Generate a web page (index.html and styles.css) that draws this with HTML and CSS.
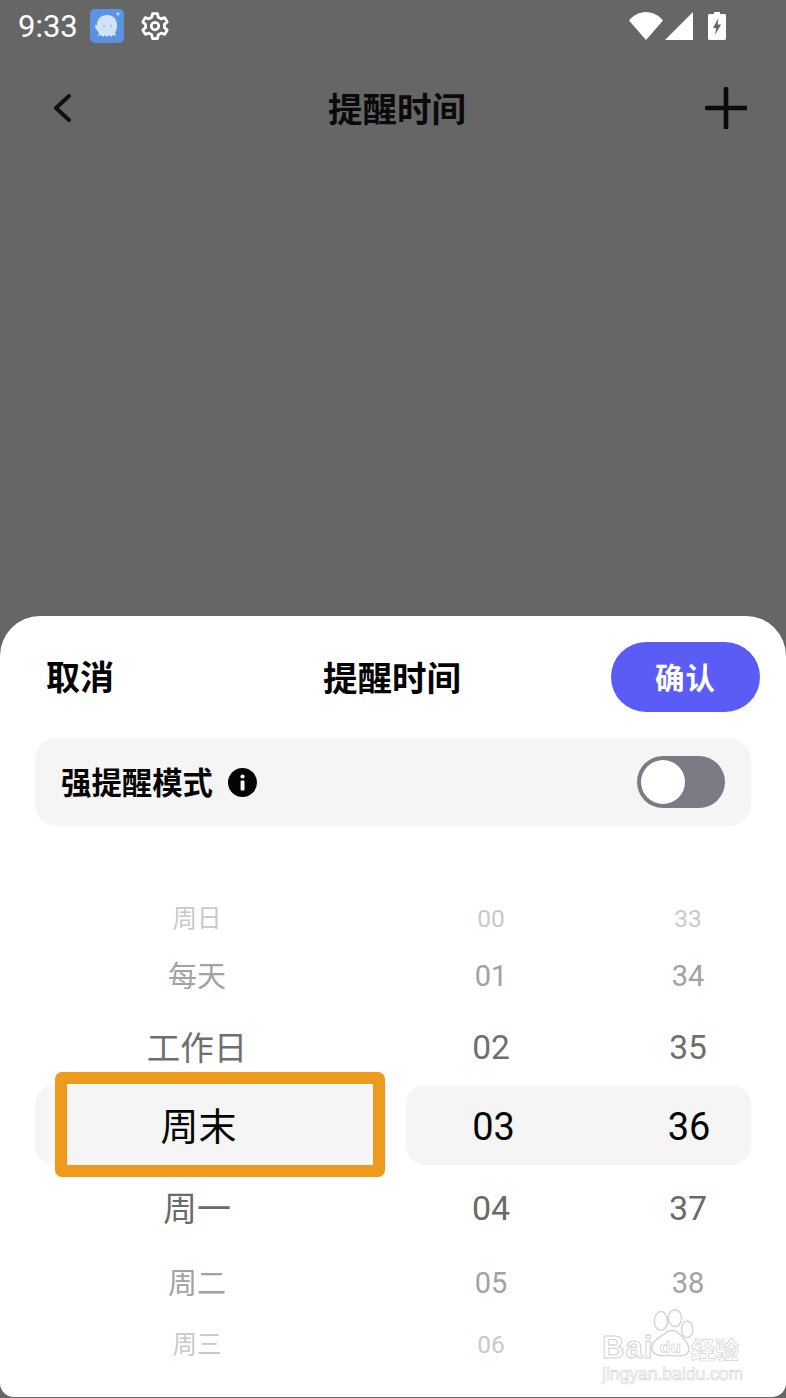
FILE: index.html
```html
<!doctype html>
<html lang="zh">
<head>
<meta charset="utf-8">
<title>提醒时间</title>
<link rel="stylesheet" href="styles.css">
</head>
<body>

	<div class="status">
		<span class="time">9:33</span>
		<svg class="app-icon" viewBox="0 0 34 34">
			<defs>
				<linearGradient id="appBg" x1="0" y1="0" x2="0" y2="1">
					<stop offset="0" stop-color="#5a96e6"/>
					<stop offset="1" stop-color="#5c8fe0"/>
				</linearGradient>
			</defs>
			<rect width="34" height="34" rx="5" fill="url(#appBg)"/>
			<path d="M7 16c0-6 4-10 10-10s10 4 10 10c0 4-1 6-2 8l1 3-3-1-2 2-2-2-2 2-2-2-2 2-2-2-3 1 1-3c-1-2-4-4-4-8z" fill="#d3e3f6"/>
			<circle cx="14" cy="17" r="1" fill="#9db9dd"/>
			<circle cx="21" cy="17" r="1" fill="#9db9dd"/>
			<circle cx="28" cy="5" r="1.4" fill="#cfe1f7"/>
		</svg>
		<svg class="gear" viewBox="0 0 24 24" fill="none" stroke="#fff" stroke-width="2.200" stroke-linejoin="round">
			<path d="M10 2h4l.6 3 2.300 1.300 2.900-1 2 3.400-2.300 2 .1 2.600 2.200 2-2 3.400-2.900-1-2.300 1.300-.6 3h-4l-.6-3-2.300-1.300-2.900 1-2-3.400 2.300-2-.1-2.600-2.200-2 2-3.400 2.900 1L9.400 5z"/>
			<circle cx="12" cy="12" r="3"/>
		</svg>
		<span class="status-gap"></span>
		<svg class="wifi" viewBox="0 0 34 28"><path d="M0 8.500C4 3.500 10.500 0 17 0s13 3.500 17 8.500L17 28z" fill="#fff"/></svg>
		<svg class="signal" viewBox="0 0 28 28"><path d="M28 0v28H0z" fill="#fff"/></svg>
		<svg class="battery" viewBox="0 0 18 28">
			<path d="M6 0h6v2h4.500c.8 0 1.500.7 1.500 1.500v23c0 .8-.7 1.500-1.500 1.500h-15C.7 28 0 27.300 0 26.500v-23C0 2.700.7 2 1.500 2H6z" fill="#fff"/>
			<path d="M10.500 6 5 16h3.200L7 23l6-10.500H9.700z" fill="#666"/>
		</svg>
	</div>

	<div class="nav">
		<svg class="back" viewBox="0 0 20 30" fill="none" stroke="#111" stroke-width="4" stroke-linecap="round" stroke-linejoin="round"><path d="M17 3 4 15l13 12"/></svg>
		<span class="nav-title">提醒时间</span>
		<svg class="plus" viewBox="0 0 42 42" fill="none" stroke="#0b0b0b" stroke-width="4.600" stroke-linecap="round"><path d="M21 2v39M2 21h39"/></svg>
	</div>

	<div class="spacer"></div>

	<div class="sheet">

		<div class="sheet-head">
			<span class="cancel">取消</span>
			<span class="sheet-title">提醒时间</span>
			<span class="confirm">确认</span>
		</div>

		<div class="mode">
			<span class="mode-label">强提醒模式</span>
			<svg class="info" viewBox="0 0 29 29">
				<circle cx="14.500" cy="14.500" r="14.500" fill="#050505"/>
				<circle cx="14.500" cy="8.500" r="2.100" fill="#fff"/>
				<rect x="12.600" y="12.500" width="3.900" height="10" rx="1" fill="#fff"/>
			</svg>
			<span class="toggle"><span class="knob"></span></span>
		</div>

		<div class="wheel">
			<span class="cell day r1 f1">周日</span><span class="gap"></span><span class="cell hour r1 f1">00</span><span class="cell min r1 f1">33</span>
			<span class="cell day r2 f2">每天</span><span class="gap"></span><span class="cell hour r2 f2">01</span><span class="cell min r2 f2">34</span>
			<span class="cell day r3 f3">工作日</span><span class="gap"></span><span class="cell hour r3 f3">02</span><span class="cell min r3 f3">35</span>
			<span class="cell day r4 f4 band-l">周末</span><span class="gap"></span><span class="cell hour r4 f4 band-m">03</span><span class="cell min r4 f4 band-r">36</span>
			<span class="cell day r5 f5">周一</span><span class="gap"></span><span class="cell hour r5 f5">04</span><span class="cell min r5 f5">37</span>
			<span class="cell day r6 f6">周二</span><span class="gap"></span><span class="cell hour r6 f6">05</span><span class="cell min r6 f6">38</span>
			<span class="cell day r7 f7">周三</span><span class="gap"></span><span class="cell hour r7 f7">06</span><span class="cell min r7 f7"></span>
			<div class="mark"></div>
		</div>

		<div class="watermark">
			<svg class="paw" viewBox="0 0 64 56" fill="#fff" stroke="#d2d2d2" stroke-width="1.500">
				<ellipse cx="18" cy="13" rx="7" ry="10"/>
				<ellipse cx="33" cy="10" rx="7" ry="9"/>
				<ellipse cx="46" cy="22" rx="6" ry="9"/>
				<path d="M26 24c6-3 12 2 17 9 6 7 8 15-2 17-7 1-12-1-20 0-9 1-15-5-12-12 3-6 10-9 17-14z"/>
			</svg>
			<div class="wm-top"><span class="wm-bai">Bai</span><span class="wm-du">du</span><span class="wm-jy">经验</span></div>
			<div class="wm-url">jingyan.baidu.com</div>
		</div>

	</div>

</body>
</html>
```

FILE: styles.css
```css
html, body { height: 100%; }
body { background: #666; display: flex; flex-direction: column; font-family: "Noto Sans CJK SC", Roboto, sans-serif; margin: 0; overflow: hidden; }

.status { align-items: center; display: flex; flex: none; height: 52px; padding: 0 60px 0 18px; }
.time { color: #fff; font: 400 31px Roboto, sans-serif; width: 72px; }
.app-icon { height: 34px; width: 34px; }
.gear { height: 30px; margin-left: 16px; width: 30px; }
.status-gap { flex: 1; }
.wifi { height: 28px; width: 34px; }
.signal { height: 28px; margin-left: 2px; width: 28px; }
.battery { height: 28px; margin-left: 15px; width: 18px; }

.nav { align-items: center; display: flex; flex: none; height: 112px; justify-content: space-between; padding: 0 39px 0 52px; }
.back { height: 30px; width: 20px; }
.nav-title { color: #0a0a0a; font-size: 34.500px; font-weight: 700; line-height: 48px; margin: 0 0 3px 17px; }
.plus { height: 42px; width: 42px; }

.spacer { flex: 1; }

.sheet { background: #fff; border-radius: 40px 40px 14px 14px; box-sizing: border-box; flex: none; height: 781px; margin-bottom: 1px; padding-top: 26px; position: relative; }

.sheet-head { align-items: center; display: grid; grid-template-columns: 277px auto 1fr; height: 70px; padding: 0 26px 0 46px; }
.cancel, .sheet-title { color: #050505; font-size: 34px; font-weight: 700; margin-bottom: 3px; }
.sheet-title { font-size: 34.500px; }
.confirm { background: #5b5bf6; border-radius: 35px; color: #fff; font-size: 29.500px; font-weight: 700; height: 70px; justify-self: end; letter-spacing: 1px; line-height: 68px; text-align: center; width: 149px; }

.mode { align-items: center; background: #f5f5f6; border-radius: 22px; display: flex; height: 88px; margin: 26px 35px 0; padding: 0 26px 0 26px; }
.mode-label { color: #050505; font-size: 30.400px; font-weight: 700; margin-bottom: 2px; }
.info { height: 29px; margin-left: 15px; width: 29px; }
.toggle { background: #7b7b85; border-radius: 26px; box-sizing: border-box; display: flex; height: 52px; margin-left: auto; padding: 4px; width: 88px; }
.knob { background: #fff; border-radius: 50%; height: 44px; width: 44px; }

.wheel { display: grid; grid-template-columns: 351px 20px 170px 175px; grid-template-rows: 50px 66px 76px 80px 86px 64px 58px; margin: 67px 35px 0; position: relative; }
.cell { align-items: center; display: flex; font-family: Roboto, "Noto Sans CJK SC", sans-serif; justify-content: center; }
.day { font-family: "Noto Sans CJK SC", sans-serif; padding: 0 27px 4px 0; }
.min { padding-left: 49px; }

.f1, .f7 { color: #c9c9c9; font-size: 24.500px; }
.f2, .f6 { color: #a2a2a2; font-size: 29px; }
.f3 { color: #6f6f6f; font-size: 33.500px; }
.f5 { color: #6a6a6a; font-size: 34px; }
.f4 { color: #050505; font-size: 38px; }
.band-l, .band-m, .band-r { background: #f5f5f6; }
.band-l, .band-m { border-radius: 20px 0 0 20px; }
.band-l { padding-left: 3px; }
.band-m { padding: 4px 0 0 5px; }
.band-r { border-radius: 0 20px 20px 0; padding: 4px 0 0 51px; }

.mark { border: 12.500px solid #ee9a1c; border-radius: 7px; box-shadow: 0 0 0 6px rgba(255,255,255,.35); box-sizing: border-box; height: 105px; left: 20px; position: absolute; top: 179px; width: 330px; }

.watermark { bottom: 12px; color: #fff; pointer-events: none; position: absolute; right: 42px; width: 142px; }
.paw { display: block; height: 54px; margin-bottom: -29px; margin-left: 42px; position: relative; width: 60px; }
.wm-top { align-items: center; display: flex; height: 30px; position: relative; }
.wm-bai { color: #fff; font: 700 31px "Liberation Sans", sans-serif; letter-spacing: 1px; -webkit-text-stroke: 1px #d2d2d2; width: 58px; }
.wm-du { color: #fff; font: 700 17px "Liberation Sans", sans-serif; -webkit-text-stroke: .7px #d2d2d2; width: 31px; }
.wm-jy { color: #fff; font: 700 24px "Noto Sans CJK SC", sans-serif; -webkit-text-stroke: .7px #d2d2d2; white-space: nowrap; }
.wm-url { color: #fff; font: 400 17.500px "Liberation Sans", sans-serif; -webkit-text-stroke: .6px #d2d2d2; line-height: 22px; white-space: nowrap; }
```
